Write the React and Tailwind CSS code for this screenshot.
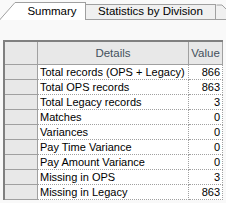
import React from 'react';

const rows = [
  ['Total records (OPS + Legacy)', '866'],
  ['Total OPS records', '863'],
  ['Total Legacy records', '3'],
  ['Matches', '0'],
  ['Variances', '0'],
  ['Pay Time Variance', '0'],
  ['Pay Amount Variance', '0'],
  ['Missing in OPS', '3'],
  ['Missing in Legacy', '863'],
];

const font = { fontFamily: '"Liberation Sans", Arial, sans-serif' };

const Tabs = () => (
  <div className="relative flex h-[20px] items-end">
    {/* bottom line of the strip, hidden under the active tab */}
    <div className="absolute left-0 right-0 bottom-0 h-px bg-[#a0a0a0]" />
    <svg width="16" height="20" className="relative block shrink-0">
      <polygon points="0,20 15,2 16,2 16,20" fill="#ffffff" />
      <line x1="0" y1="19.5" x2="15" y2="2.5" stroke="#a0a0a0" strokeWidth="1" />
      <line x1="15" y1="2.5" x2="16" y2="2.5" stroke="#a0a0a0" strokeWidth="1" />
    </svg>
    <div className="relative flex h-[18px] w-[70px] items-center justify-center border-t border-r border-[#a0a0a0] bg-white pl-[3px] text-[11.5px] text-black">
      Summary
    </div>
    <div className="relative flex h-[16px] w-[130px] items-center justify-center border-t border-r border-b border-[#a0a0a0] bg-[#f0f0f0] text-[11.5px] text-black">
      Statistics by Division
    </div>
    <svg width="10" height="16" className="relative block shrink-0">
      <polygon points="0,16 0,1 6,1 10,4 10,16" fill="#f0f0f0" />
      <polyline points="0.5,1 6,1 10,5" fill="none" stroke="#a0a0a0" strokeWidth="1" />
      <line x1="0" y1="15.5" x2="10" y2="15.5" stroke="#a0a0a0" strokeWidth="1" />
    </svg>
  </div>
);

export default function App() {
  return (
    <div className="w-[226px] h-[203px] overflow-hidden bg-[#f9f9f9]" style={font}>
      <Tabs />
      <div className="pt-[20px] pl-[3px]">
        <div className="w-[220px] border-t-2 border-l-2 border-[#808080]">
          <div className="grid grid-cols-[33px_151px_34px]">
            <div className="h-[23px] border-r border-b border-[#a0a0a0] bg-[#e8e8e8]" />
            <div className="flex h-[23px] items-center justify-center border-r border-b border-[#a0a0a0] bg-[#e8e8e8] pt-px text-[11.5px] text-[#44505c]">
              Details
            </div>
            <div className="flex h-[23px] items-center justify-center border-r border-b border-[#a0a0a0] bg-[#e8e8e8] pt-px text-[11.5px] text-[#44505c]">
              Value
            </div>
            {rows.map(([label, value]) => (
              <React.Fragment key={label}>
                <div className="h-[15px] border-r border-b border-[#a0a0a0] bg-[#e8e8e8]" />
                <div className="flex h-[15px] items-center border-r border-b border-dotted border-[#a0a0a0] bg-white pl-[2px] text-[11px] leading-none text-black whitespace-nowrap">
                  {label}
                </div>
                <div className="flex h-[15px] items-center justify-end border-r border-b border-dotted border-[#a0a0a0] bg-white pr-[2px] text-[11px] leading-none text-black">
                  {value}
                </div>
              </React.Fragment>
            ))}
          </div>
        </div>
      </div>
    </div>
  );
}
